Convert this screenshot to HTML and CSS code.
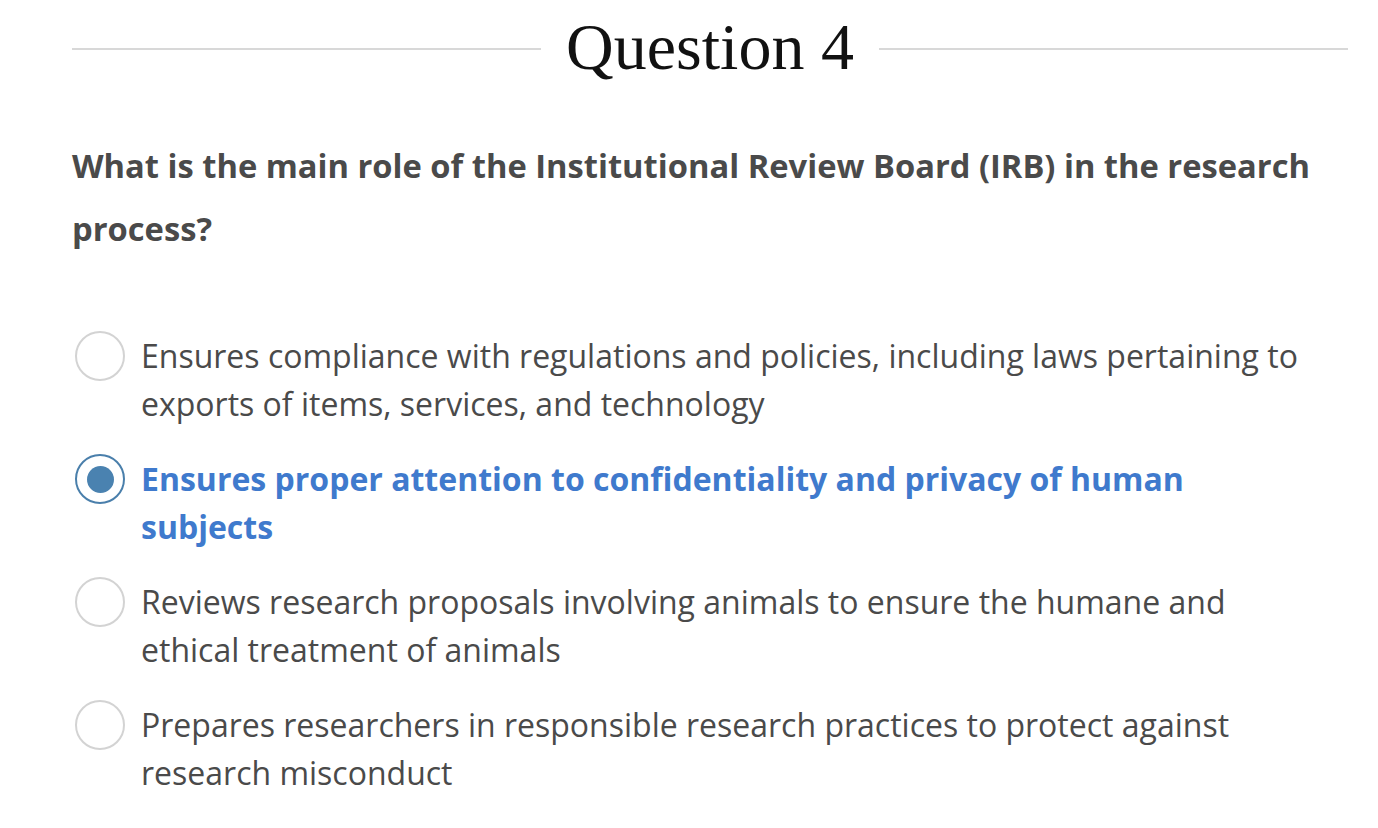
FILE: index.html
```html
<!DOCTYPE html>
<html lang="en">
<head>
<meta charset="utf-8">
<title>Question 4</title>
<link rel="stylesheet" href="styles.css">
</head>
<body>
<div class="quiz">
  <div class="title-row">
    <span class="rule"></span>
    <h1 class="title">Question 4</h1>
    <span class="rule"></span>
  </div>
  <div class="body">
    <p class="prompt">What is the main role of the Institutional Review Board (IRB) in the research process?</p>
    <ul class="options">
      <li class="option">
        <span class="radio"></span>
        <span class="label">Ensures compliance with regulations and policies, including laws pertaining to exports of items, services, and technology</span>
      </li>
      <li class="option selected">
        <span class="radio"></span>
        <span class="label">Ensures proper attention to confidentiality and privacy of human subjects</span>
      </li>
      <li class="option">
        <span class="radio"></span>
        <span class="label">Reviews research proposals involving animals to ensure the humane and ethical treatment of animals</span>
      </li>
      <li class="option">
        <span class="radio"></span>
        <span class="label">Prepares researchers in responsible research practices to protect against research misconduct</span>
      </li>
    </ul>
  </div>
</div>
</body>
</html>
```

FILE: styles.css
```css
* { box-sizing: border-box; }
html, body { margin: 0; padding: 0; background: #ffffff; }
body { font-family: "Open Sans", sans-serif; color: #4a4a4a; }

.quiz {
  width: 1276px;
  margin-left: 72px;
  padding-top: 9px;
}

.title-row {
  display: flex;
  align-items: center;
  gap: 25px;
}
.rule {
  flex: 1;
  height: 2px;
  background: #d8d8d8;
  margin-top: 4px;
}
.title {
  margin: 0;
  font-family: "Liberation Serif", serif;
  font-weight: 400;
  font-size: 66px;
  line-height: 76px;
  color: #111111;
}

.body {
  padding-right: 36px;
}

.prompt {
  margin: 49px 0 0 0;
  font-size: 32.7px;
  font-weight: 700;
  line-height: 63px;
  color: #4a4a4a;
}

.options {
  list-style: none;
  margin: 72px 0 0 0;
  padding: 0;
  display: flex;
  flex-direction: column;
  gap: 27px;
}
.option {
  display: flex;
  align-items: flex-start;
  gap: 16px;
  padding-left: 3px;
}
.radio {
  flex: none;
  width: 50px;
  height: 50px;
  border: 2px solid #d3d3d3;
  border-radius: 50%;
  margin-top: -1px;
  position: relative;
}
.label {
  font-size: 32px;
  line-height: 48px;
  color: #4a4a4a;
}
.selected .label {
  color: #3f7acd;
  font-weight: 700;
}
.selected .radio {
  border-color: #4a7fab;
}
.selected .radio::after {
  content: "";
  position: absolute;
  left: 50%;
  top: 50%;
  width: 27px;
  height: 27px;
  margin: -13.5px 0 0 -13.5px;
  border-radius: 50%;
  background: #4a82b0;
}
```
